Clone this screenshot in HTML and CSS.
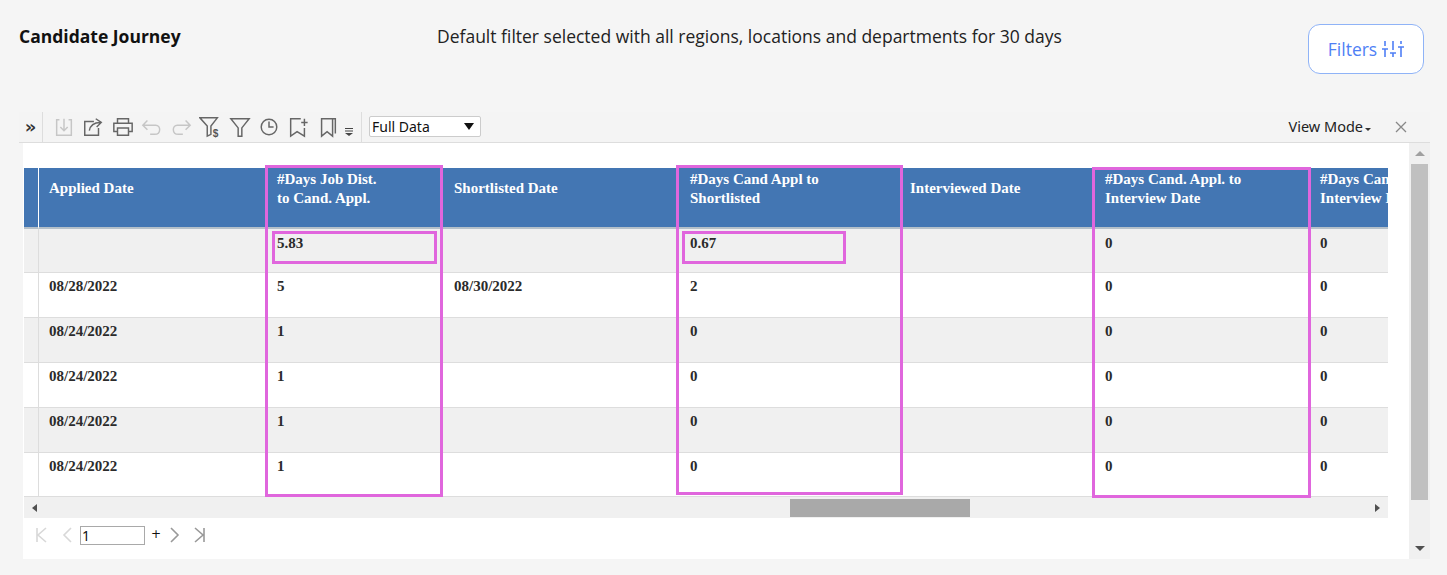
FILE: index.html
```html
<!DOCTYPE html>
<html lang="en">
<head>
<meta charset="utf-8">
<title>Candidate Journey</title>
<link rel="stylesheet" href="styles.css">
</head>
<body>
<header class="top">
  <h1 class="title">Candidate Journey</h1>
  <p class="note">Default filter selected with all regions, locations and departments for 30 days</p>
  <button class="filters">Filters
    <svg width="22" height="18" viewBox="0 0 22 18" fill="none" stroke="currentColor" stroke-width="1.6"><path d="M3 1v5M3 9v8M0 9h6M11 1v9M11 13v4M8 13h6M19 1v3M19 7v10M16 7h6"/></svg>
  </button>
</header>
<section class="report">
  <div class="toolbar">
    <span class="expand">»</span>
    <span class="sep"></span>
    <svg class="ic dis dl" viewBox="0 0 24 24"><path d="M7 4H4v17h16V4h-3M12 3v13M8 12l4 4 4-4"/></svg>
    <svg class="ic" viewBox="0 0 24 24"><path d="M13 6H3v15h15v-8M8 16c1-6 5-9 12-9M15 3l6 4-5 5"/></svg>
    <svg class="ic" viewBox="0 0 24 24"><path d="M6 8V3h12v5M6 17H2V8h20v9h-4M6 13h12v8H6z"/></svg>
    <svg class="ic dis" viewBox="0 0 24 24"><path d="M7 5L2 10l5 5M2 10h14c6 0 6 10-1 10H10"/></svg>
    <svg class="ic dis" viewBox="0 0 24 24"><path d="M17 5l5 5-5 5M22 10H8c-6 0-6 10 1 10h5"/></svg>
    <svg class="ic" viewBox="0 0 24 24"><path d="M1 2h19l-7 9v9l-4 2V11z"/><text class="dollar" x="15" y="23">$</text></svg>
    <svg class="ic" viewBox="0 0 24 24"><path d="M2 3h20l-8 10v9h-4V13z"/></svg>
    <svg class="ic" viewBox="0 0 24 24"><circle cx="12" cy="12" r="8.5"/><path d="M12 6v6h5"/></svg>
    <svg class="ic" viewBox="0 0 24 24"><path d="M15 3H4v19l7-5 8 5v-9M15.500 7h7M19 3v8"/></svg>
    <svg class="ic" viewBox="0 0 24 24"><path d="M5 3h12v19l-6-5-6 5zM17 3h3v16"/></svg>
    <svg class="more" width="8" height="8" viewBox="0 0 8 8"><path d="M0 .5h8M0 3h8" stroke="#444" fill="none"/><path d="M0 5h8L4 8z" fill="#444"/></svg>
    <span class="sep sep-b"></span>
    <span class="select-box"><select class="data-select"><option>Full Data</option></select></span>
    <span class="view">View Mode<i class="caret"></i></span>
    <svg class="close" width="12" height="12" viewBox="0 0 12 12"><path d="M1 1l10 10M11 1L1 11" stroke="#888" stroke-width="1.300"/></svg>
  </div>
  <div class="panel">
    <div class="content">
      <div class="table-wrap">
        <table class="grid">
          <colgroup><col class="c0"><col class="c1"><col class="c2"><col class="c3"><col class="c4"><col class="c5"><col class="c6"><col class="c7"></colgroup>
          <thead>
            <tr><th></th><th>Applied Date</th><th>#Days Job Dist.<br>to Cand. Appl.</th><th>Shortlisted Date</th><th>#Days Cand Appl to<br>Shortlisted</th><th>Interviewed Date</th><th>#Days Cand. Appl. to<br>Interview Date</th><th>#Days Cand. Appl. to<br>Interview Date</th></tr>
          </thead>
          <tbody>
            <tr><td></td><td></td><td>5.83</td><td></td><td>0.67</td><td></td><td>0</td><td>0</td></tr>
            <tr><td></td><td>08/28/2022</td><td>5</td><td>08/30/2022</td><td>2</td><td></td><td>0</td><td>0</td></tr>
            <tr><td></td><td>08/24/2022</td><td>1</td><td></td><td>0</td><td></td><td>0</td><td>0</td></tr>
            <tr><td></td><td>08/24/2022</td><td>1</td><td></td><td>0</td><td></td><td>0</td><td>0</td></tr>
            <tr><td></td><td>08/24/2022</td><td>1</td><td></td><td>0</td><td></td><td>0</td><td>0</td></tr>
            <tr><td></td><td>08/24/2022</td><td>1</td><td></td><td>0</td><td></td><td>0</td><td>0</td></tr>
          </tbody>
        </table>
      </div>
      <div class="hscroll">
        <i class="arr arr-l"></i>
        <div class="track"><div class="hthumb"></div></div>
        <i class="arr arr-r"></i>
      </div>
      <div class="pager">
        <svg class="pg faint pg-first" width="12" height="16" viewBox="0 0 12 16"><path d="M2 1v14M11 1L3 8l8 7"/></svg>
        <svg class="pg faint pg-prev" width="10" height="16" viewBox="0 0 10 16"><path d="M9 1L2 8l7 7"/></svg>
        <input class="page-input" value="1">
        <span class="plus">+</span>
        <svg class="pg pg-next" width="10" height="16" viewBox="0 0 10 16"><path d="M1 1l7 7-7 7"/></svg>
        <svg class="pg" width="12" height="16" viewBox="0 0 12 16"><path d="M10 1v14M1 1l8 7-8 7"/></svg>
      </div>
      <div class="mark m1"></div>
      <div class="mark m2"></div>
      <div class="mark m3"></div>
      <div class="mark m4"></div>
      <div class="mark m5"></div>
    </div>
    <div class="vscroll">
      <i class="arr arr-u"></i>
      <div class="vthumb"></div>
      <i class="arr arr-d"></i>
    </div>
  </div>
</section>
</body>
</html>
```
FILE: styles.css
```css
* { box-sizing: border-box; }
html, body { margin: 0; height: 100%; }
body { background: #f5f5f5; font-family: "Open Sans", "Liberation Sans", sans-serif; color: #111; overflow: hidden; }

.top { height: 112px; padding: 24px 23px 0 19px; display: flex; align-items: flex-start; }
.title { margin: 0; width: 418px; font-size: 17.500px; line-height: 25px; font-weight: 700; color: #111; white-space: nowrap; }
.note { margin: 0; width: 871px; font-size: 17.500px; line-height: 24px; color: #222; white-space: nowrap; }
.filters { width: 116px; height: 50px; border: 1px solid #8fb3f7; border-radius: 12px; background: #fff; color: #4f7ff5; font: 17.500px "Open Sans", sans-serif; display: flex; align-items: center; justify-content: center; gap: 5px; padding: 0; }

.report { margin-left: 19px; width: 1411px; }
.toolbar { height: 31px; display: flex; align-items: center; border-bottom: 1px solid #ddd; background: #f4f4f4; }
.expand { width: 23px; text-align: center; font: bold 18px/24px "DejaVu Sans", sans-serif; color: #333; }
.sep { width: 1px; height: 30px; background: #ddd; margin-right: 8px; }
.sep-b { margin-left: 8px; margin-right: 7px; }
.ic { width: 22px; height: 22px; margin-right: 7.300px; flex: none; fill: none; stroke: #666; stroke-width: 1.600; }
.dis { stroke: #c6c6c6; }
.dl { margin-left: 2px; }
.dollar { font: bold 11px "Liberation Sans", sans-serif; fill: #555; stroke: none; }
.more { margin-left: -1px; margin-top: 10px; }
.select-box { position: relative; width: 112px; height: 21px; display: block; margin-bottom: 2px; }
.select-box::after { content: ""; position: absolute; right: 7px; top: 7px; border: 5px solid transparent; border-top: 7px solid #111; border-bottom: 0; pointer-events: none; }
.data-select { appearance: none; display: block; width: 100%; height: 100%; font: 14px "Noto Sans", sans-serif; background: #fff; border: 1px solid #ccc; border-radius: 2px; padding: 0 0 0 2px; color: #111; }
.view { margin-left: auto; margin-bottom: 2px; font: 14.500px "Noto Sans", sans-serif; color: #222; white-space: nowrap; display: flex; align-items: center; }
.caret { width: 0; height: 0; border: 3px solid transparent; border-top-color: #333; border-bottom: 0; margin: 7px 0 0 2px; }
.close { margin: 0 23px 0 24px; }

.panel { margin-left: 4px; display: flex; height: 416px; }
.content { position: relative; width: 1387px; background: #fff; padding: 25px 0 0 1px; }
.table-wrap { width: 1364px; height: 329px; overflow: hidden; border-bottom: 1px solid #ddd; }
.grid { width: 1521px; table-layout: fixed; border-collapse: separate; border-spacing: 0; font: bold 15px "Liberation Serif", serif; color: #2b2b2b; }
.c0 { width: 15px; } .c1 { width: 228px; } .c2 { width: 177px; } .c3 { width: 236px; } .c4 { width: 220px; } .c5 { width: 195px; } .c6 { width: 215px; } .c7 { width: 235px; }
.grid th { height: 61px; background: #4376b3; color: #fff; text-align: left; font-weight: 700; line-height: 19px; padding: 0 10px 18px; vertical-align: middle; border-bottom: 2px solid #b5c0c9; white-space: nowrap; }
.grid th:first-child { border-right: 1px solid #fff; }
.grid td { height: 45px; padding: 5px 10px 0; vertical-align: top; line-height: 16px; border-bottom: 1px solid #ddd; white-space: nowrap; }
.grid td:first-child { border-right: 1px solid #ddd; }
.grid tbody tr:nth-child(odd) td { background: #f0f0f0; }
.grid tbody tr:first-child td { height: 44px; padding-top: 6px; }
.grid tbody tr:last-child td { height: 44px; border-bottom: 0; }

.hscroll { width: 1364px; height: 21px; background: #f0f0f0; display: flex; align-items: center; justify-content: space-between; }
.track { flex: 1; height: 18px; margin: 0 8px; position: relative; }
.hthumb { position: absolute; left: 745px; width: 180px; height: 18px; background: #a9a9a9; }
.arr { display: block; width: 0; height: 0; border: 4px solid transparent; flex: none; }
.arr-l { border-left: 0; border-right: 5px solid #505050; margin-left: 8px; }
.arr-r { border-right: 0; border-left: 5px solid #505050; margin-right: 8px; }
.arr-u { border-top: 0; border-bottom: 5px solid #a0a0a0; border-width: 0 5px 5px; }
.arr-d { border-bottom: 0; border-top: 5px solid #505050; border-width: 5px 5px 0; }

.pager { height: 40px; display: flex; align-items: center; padding-left: 11px; padding-bottom: 6px; }
.pg { fill: none; stroke: #999; stroke-width: 1.600; flex: none; }
.faint { stroke: #d8d8d8; }
.pg-first { margin-right: 15px; }
.pg-prev { margin-right: 8px; }
.pg-next { margin-right: 14px; }
.page-input { width: 65px; height: 19px; flex: none; border: 1px solid #a9a9a9; padding: 0 0 0 1px; font: 14px "Noto Sans", sans-serif; color: #111; background: #fff; }
.plus { width: 25px; padding-left: 6px; margin-top: -2px; font: 12px "DejaVu Sans", sans-serif; color: #111; }

.vscroll { width: 21px; background: #f0f0f0; display: flex; flex-direction: column; align-items: center; padding-top: 8px; }
.vthumb { width: 17px; height: 336px; margin-top: 8px; background: #c0c0c0; }
.vscroll .arr-d { margin-top: 46px; }

.mark { position: absolute; border: 3px solid #e066dd; pointer-events: none; }
.m1 { left: 242px; top: 22px; width: 178px; height: 332px; }
.m2 { left: 249px; top: 88px; width: 165px; height: 33px; }
.m3 { left: 653px; top: 22px; width: 227px; height: 330px; }
.m4 { left: 659px; top: 88px; width: 164px; height: 33px; }
.m5 { left: 1069px; top: 24px; width: 219px; height: 331px; }
```
